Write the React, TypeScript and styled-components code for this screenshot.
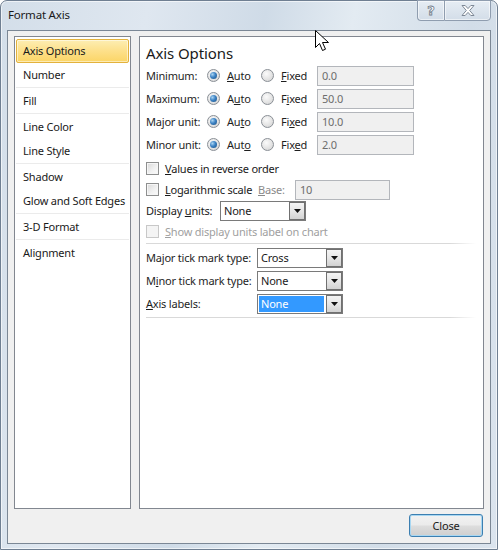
import React from "react";
import styled, { createGlobalStyle } from "styled-components";

const GlobalStyle = createGlobalStyle`
  html, body {
    margin: 0;
    padding: 0;
    background: #ffffff;
  }
  body {
    font-family: "Noto Sans", "Liberation Sans", Arial, sans-serif;
    font-size: 11px;
    letter-spacing: -0.2px;
    color: #1e1e1e;
  }
`;

const NAV_ITEMS: { label: string; sepAfter?: boolean }[] = [
  { label: "Axis Options" },
  { label: "Number", sepAfter: true },
  { label: "Fill", sepAfter: true },
  { label: "Line Color" },
  { label: "Line Style", sepAfter: true },
  { label: "Shadow" },
  { label: "Glow and Soft Edges", sepAfter: true },
  { label: "3-D Format", sepAfter: true },
  { label: "Alignment" },
];

// label with its access key (index of the underlined letter)
const AXIS_ROWS = [
  { label: "Minimum:", auto: 0, fixed: 0, value: "0.0" },
  { label: "Maximum:", auto: 1, fixed: 1, value: "50.0" },
  { label: "Major unit:", auto: 2, fixed: 2, value: "10.0" },
  { label: "Minor unit:", auto: 3, fixed: 3, value: "2.0" },
];

function Access({ text, at }: { text: string; at: number }) {
  return (
    <>
      {text.slice(0, at)}
      <Key>{text[at]}</Key>
      {text.slice(at + 1)}
    </>
  );
}

function Radio({ checked }: { checked?: boolean }) {
  return <RadioCircle>{checked && <RadioDot />}</RadioCircle>;
}

function Select({ value, $width, highlighted }: { value: string; $width: number; highlighted?: boolean }) {
  return (
    <SelectBox $width={$width}>
      <SelectValue $highlighted={highlighted}>{value}</SelectValue>
      <DropButton>
        <svg width="7" height="4" viewBox="0 0 7 4">
          <path d="M0 0h7L3.5 4z" fill="#111" />
        </svg>
      </DropButton>
    </SelectBox>
  );
}

export default function App() {
  return (
    <>
      <GlobalStyle />
      <Window>
        <TitleBar>
          <Title>Format Axis</Title>
          <CaptionButtons>
            <HelpButton>?</HelpButton>
            <CloseCaption>
              <svg width="14" height="11" viewBox="0 0 14 11">
                <path
                  d="M1 0.5h3.2L7 3.6 9.8 0.5H13L8.7 5.5 13 10.5H9.8L7 7.4 4.2 10.5H1L5.3 5.5z"
                  fill="#ffffff"
                  stroke="#7d8896"
                  strokeWidth="1"
                  strokeLinejoin="round"
                />
              </svg>
            </CloseCaption>
          </CaptionButtons>
        </TitleBar>

        <Client>
          <Body>
            <NavList>
              {NAV_ITEMS.map((item, i) => (
                <React.Fragment key={item.label}>
                  <NavItem $selected={i === 0}>{item.label}</NavItem>
                  {item.sepAfter && <NavSeparator />}
                </React.Fragment>
              ))}
            </NavList>

            <Panel>
              <Heading>Axis Options</Heading>

              <AxisGrid>
                {AXIS_ROWS.map((row) => (
                  <React.Fragment key={row.label}>
                    <FieldLabel>{row.label}</FieldLabel>
                    <Option>
                      <Radio checked />
                      <span>
                        <Access text="Auto" at={row.auto} />
                      </span>
                    </Option>
                    <Option>
                      <Radio />
                      <span>
                        <Access text="Fixed" at={row.fixed} />
                      </span>
                    </Option>
                    <TextBox $width={97}>{row.value}</TextBox>
                  </React.Fragment>
                ))}
              </AxisGrid>

              <CheckGroup>
                <CheckRow>
                  <CheckBox />
                  <span>
                    <Access text="Values in reverse order" at={0} />
                  </span>
                </CheckRow>

                <CheckRow>
                  <CheckBox />
                  <FieldLabel $width={87}>
                    <Access text="Logarithmic scale" at={0} />
                  </FieldLabel>
                  <BaseLabel>
                    <Access text="Base:" at={0} />
                  </BaseLabel>
                  <TextBox $width={95}>10</TextBox>
                </CheckRow>

                <CheckRow>
                  <FieldLabel $width={68}>
                    <Access text="Display units:" at={8} />
                  </FieldLabel>
                  <Select value="None" $width={86} />
                </CheckRow>

                <CheckRow $disabled>
                  <CheckBox $disabled />
                  <span>
                    <Access text="Show display units label on chart" at={0} />
                  </span>
                </CheckRow>
              </CheckGroup>

              <Divider />

              <TickGrid>
                <FieldLabel>
                  <Access text="Major tick mark type:" at={2} />
                </FieldLabel>
                <Select value="Cross" $width={86} />
                <FieldLabel>
                  <Access text="Minor tick mark type:" at={1} />
                </FieldLabel>
                <Select value="None" $width={86} />
                <FieldLabel>
                  <Access text="Axis labels:" at={0} />
                </FieldLabel>
                <Select value="None" $width={86} highlighted />
              </TickGrid>

              <Divider $top={2} />
            </Panel>
          </Body>

          <Footer>
            <DialogButton>Close</DialogButton>
          </Footer>
        </Client>

        <Pointer width="14" height="22" viewBox="0 0 14 22">
          <path
            d="M0.5 0.5v17l4-4 3 7 3-1.3-3-6.7h6z"
            fill="#ffffff"
            stroke="#000000"
            strokeWidth="1"
            strokeLinejoin="round"
          />
        </Pointer>
      </Window>
    </>
  );
}

const Window = styled.div`
  position: relative;
  width: 498px;
  height: 550px;
  box-sizing: border-box;
  display: flex;
  flex-direction: column;
  border: 1px solid #6f7f92;
  border-radius: 7px 7px 0 0;
  background: linear-gradient(
    100deg,
    #d3dee9 0%,
    #dfe7f0 25%,
    #cfdbe7 45%,
    #e3ebf2 60%,
    #d2dde8 80%,
    #dbe4ee 100%
  );
  box-shadow: inset 0 0 0 1px rgba(255, 255, 255, 0.6);
`;

const TitleBar = styled.div`
  height: 29px;
  display: flex;
  justify-content: space-between;
  align-items: flex-start;
  padding-left: 7px;
`;

const Title = styled.div`
  margin-top: 6px;
  font-size: 11.5px;
  color: #1a1a1a;
`;

const CaptionButtons = styled.div`
  display: flex;
  margin-right: 6px;
  margin-top: -1px;
`;

const CaptionBase = styled.div`
  height: 19px;
  display: flex;
  align-items: center;
  justify-content: center;
  border: 1px solid #8f9daf;
  background: linear-gradient(#e6edf4, #d3dde8);
  box-shadow: inset 0 0 0 1px rgba(255, 255, 255, 0.55);
`;

const HelpButton = styled(CaptionBase)`
  width: 26px;
  border-radius: 0 0 0 4px;
  border-right: none;
  font-family: "DejaVu Sans", sans-serif;
  font-weight: bold;
  font-size: 13px;
  letter-spacing: 0;
  color: #ffffff;
  -webkit-text-stroke: 0.8px #6f7b89;
`;

const CloseCaption = styled(CaptionBase)`
  width: 45px;
  border-radius: 0 0 4px 0;
`;

const Client = styled.div`
  flex: 1;
  margin: 0 6px 5px 6px;
  display: flex;
  flex-direction: column;
  background: #f0f0f0;
  border: 1px solid #7b8795;
  padding: 5px 6px 0 6px;
`;

const Body = styled.div`
  display: flex;
  gap: 8px;
  height: 473px;
`;

const NavList = styled.div`
  width: 117px;
  box-sizing: border-box;
  border: 1px solid #828790;
  background: #ffffff;
  padding: 2px 1px;
  display: flex;
  flex-direction: column;
`;

const NavItem = styled.div<{ $selected?: boolean }>`
  height: 24px;
  box-sizing: border-box;
  display: flex;
  align-items: center;
  padding: 0 0 1px 6px;
  white-space: nowrap;
  border-radius: 2px;
  border: 1px solid ${({ $selected }) => ($selected ? "#e3b23c" : "transparent")};
  background: ${({ $selected }) =>
    $selected ? "linear-gradient(#fdeeb3 0%, #fde08a 50%, #fbd566 100%)" : "transparent"};
  box-shadow: ${({ $selected }) => ($selected ? "inset 0 0 0 1px rgba(255,255,255,0.5)" : "none")};
  color: #1a1a1a;
`;

const NavSeparator = styled.div`
  height: 1px;
  margin: 0 0 1px 0;
  background: #ebebeb;
`;

const Panel = styled.div`
  flex: 1;
  box-sizing: border-box;
  border: 1px solid #828790;
  background: #ffffff;
  padding: 6px 6px 0 6px;
  display: flex;
  flex-direction: column;
`;

const Heading = styled.div`
  font-size: 15px;
  line-height: 21px;
  letter-spacing: -0.1px;
  color: #1a1a1a;
`;

const AxisGrid = styled.div`
  display: grid;
  grid-template-columns: 61px 54px 56px 97px;
  grid-auto-rows: 23px;
  align-items: center;
`;

const FieldLabel = styled.span<{ $width?: number }>`
  white-space: nowrap;
  width: ${({ $width }) => ($width ? `${$width}px` : "auto")};
  flex-shrink: 0;
`;

const Option = styled.label`
  display: flex;
  align-items: center;
  gap: 7px;
`;

const Key = styled.span`
  text-decoration: underline;
`;

const RadioCircle = styled.span`
  width: 13px;
  height: 13px;
  box-sizing: border-box;
  border-radius: 50%;
  border: 1px solid #8a8f96;
  background: radial-gradient(circle at 40% 35%, #fbfbfb 0%, #e4e4e4 55%, #cfcfcf 100%);
  display: flex;
  align-items: center;
  justify-content: center;
  flex-shrink: 0;
`;

const RadioDot = styled.span`
  width: 7px;
  height: 7px;
  border-radius: 50%;
  background: radial-gradient(circle at 35% 35%, #a9d4f2 0%, #3c82c4 45%, #1b4f80 100%);
`;

const TextBox = styled.div<{ $width: number }>`
  width: ${({ $width }) => $width}px;
  height: 20px;
  box-sizing: border-box;
  border: 1px solid #b3b6bb;
  background: #f0f0f0;
  color: #6d6d6d;
  padding-left: 4px;
  display: flex;
  align-items: center;
  flex-shrink: 0;
`;

const CheckGroup = styled.div`
  display: flex;
  flex-direction: column;
  margin-top: 2px;
`;

const CheckRow = styled.div<{ $disabled?: boolean }>`
  height: 21px;
  display: flex;
  align-items: center;
  gap: 6px;
  color: ${({ $disabled }) => ($disabled ? "#a0a0a0" : "#1a1a1a")};
`;

const CheckBox = styled.span<{ $disabled?: boolean }>`
  width: 13px;
  height: 13px;
  box-sizing: border-box;
  border: 1px solid ${({ $disabled }) => ($disabled ? "#c8c8c8" : "#8e8f8f")};
  background: ${({ $disabled }) =>
    $disabled ? "#f4f4f4" : "linear-gradient(135deg, #d8d8d8 0%, #f2f2f2 60%, #fbfbfb 100%)"};
  box-shadow: inset 0 0 0 1px ${({ $disabled }) => ($disabled ? "#f4f4f4" : "#f6f6f6")};
  flex-shrink: 0;
`;

const BaseLabel = styled.span`
  width: 31px;
  flex-shrink: 0;
  color: #8a8a8a;
`;

const SelectBox = styled.div<{ $width: number }>`
  width: ${({ $width }) => $width}px;
  height: 20px;
  box-sizing: border-box;
  border: 1px solid #7a7a7a;
  background: #ffffff;
  display: flex;
  align-items: stretch;
  padding: 1px;
  gap: 2px;
  flex-shrink: 0;
`;

const SelectValue = styled.div<{ $highlighted?: boolean }>`
  flex: 1;
  display: flex;
  align-items: center;
  padding-left: 2px;
  color: ${({ $highlighted }) => ($highlighted ? "#ffffff" : "#1a1a1a")};
  background: ${({ $highlighted }) => ($highlighted ? "#3399ff" : "transparent")};
`;

const DropButton = styled.div`
  width: 16px;
  box-sizing: border-box;
  border: 1px solid #707070;
  background: linear-gradient(#f4f4f4 0%, #e6e6e6 50%, #d2d2d2 100%);
  display: flex;
  align-items: center;
  justify-content: center;
  margin: -1px -1px -1px 0;
`;

const Divider = styled.div<{ $top?: number }>`
  height: 1px;
  margin: ${({ $top }) => $top ?? 1}px 1px 0 0;
  background: linear-gradient(to right, #d9d9d9 0%, #d9d9d9 92%, #ffffff 100%);
`;

const TickGrid = styled.div`
  display: grid;
  grid-template-columns: 111px 86px;
  grid-auto-rows: 23px;
  align-items: center;
  margin-top: 2px;
`;

const Footer = styled.div`
  display: flex;
  justify-content: flex-end;
  padding: 5px 1px 0 0;
`;

const DialogButton = styled.button`
  width: 74px;
  height: 23px;
  box-sizing: border-box;
  border: 1px solid #3c7fb1;
  border-radius: 3px;
  background: linear-gradient(#f2f2f2 0%, #ebebeb 48%, #dddddd 52%, #cfcfcf 100%);
  box-shadow: inset 0 0 0 1px #a8d7f2;
  font-family: inherit;
  font-size: 11px;
  letter-spacing: -0.2px;
  color: #1a1a1a;
  padding: 0;
`;

const Pointer = styled.svg`
  position: absolute;
  left: 314px;
  top: 29px;
  pointer-events: none;
`;
